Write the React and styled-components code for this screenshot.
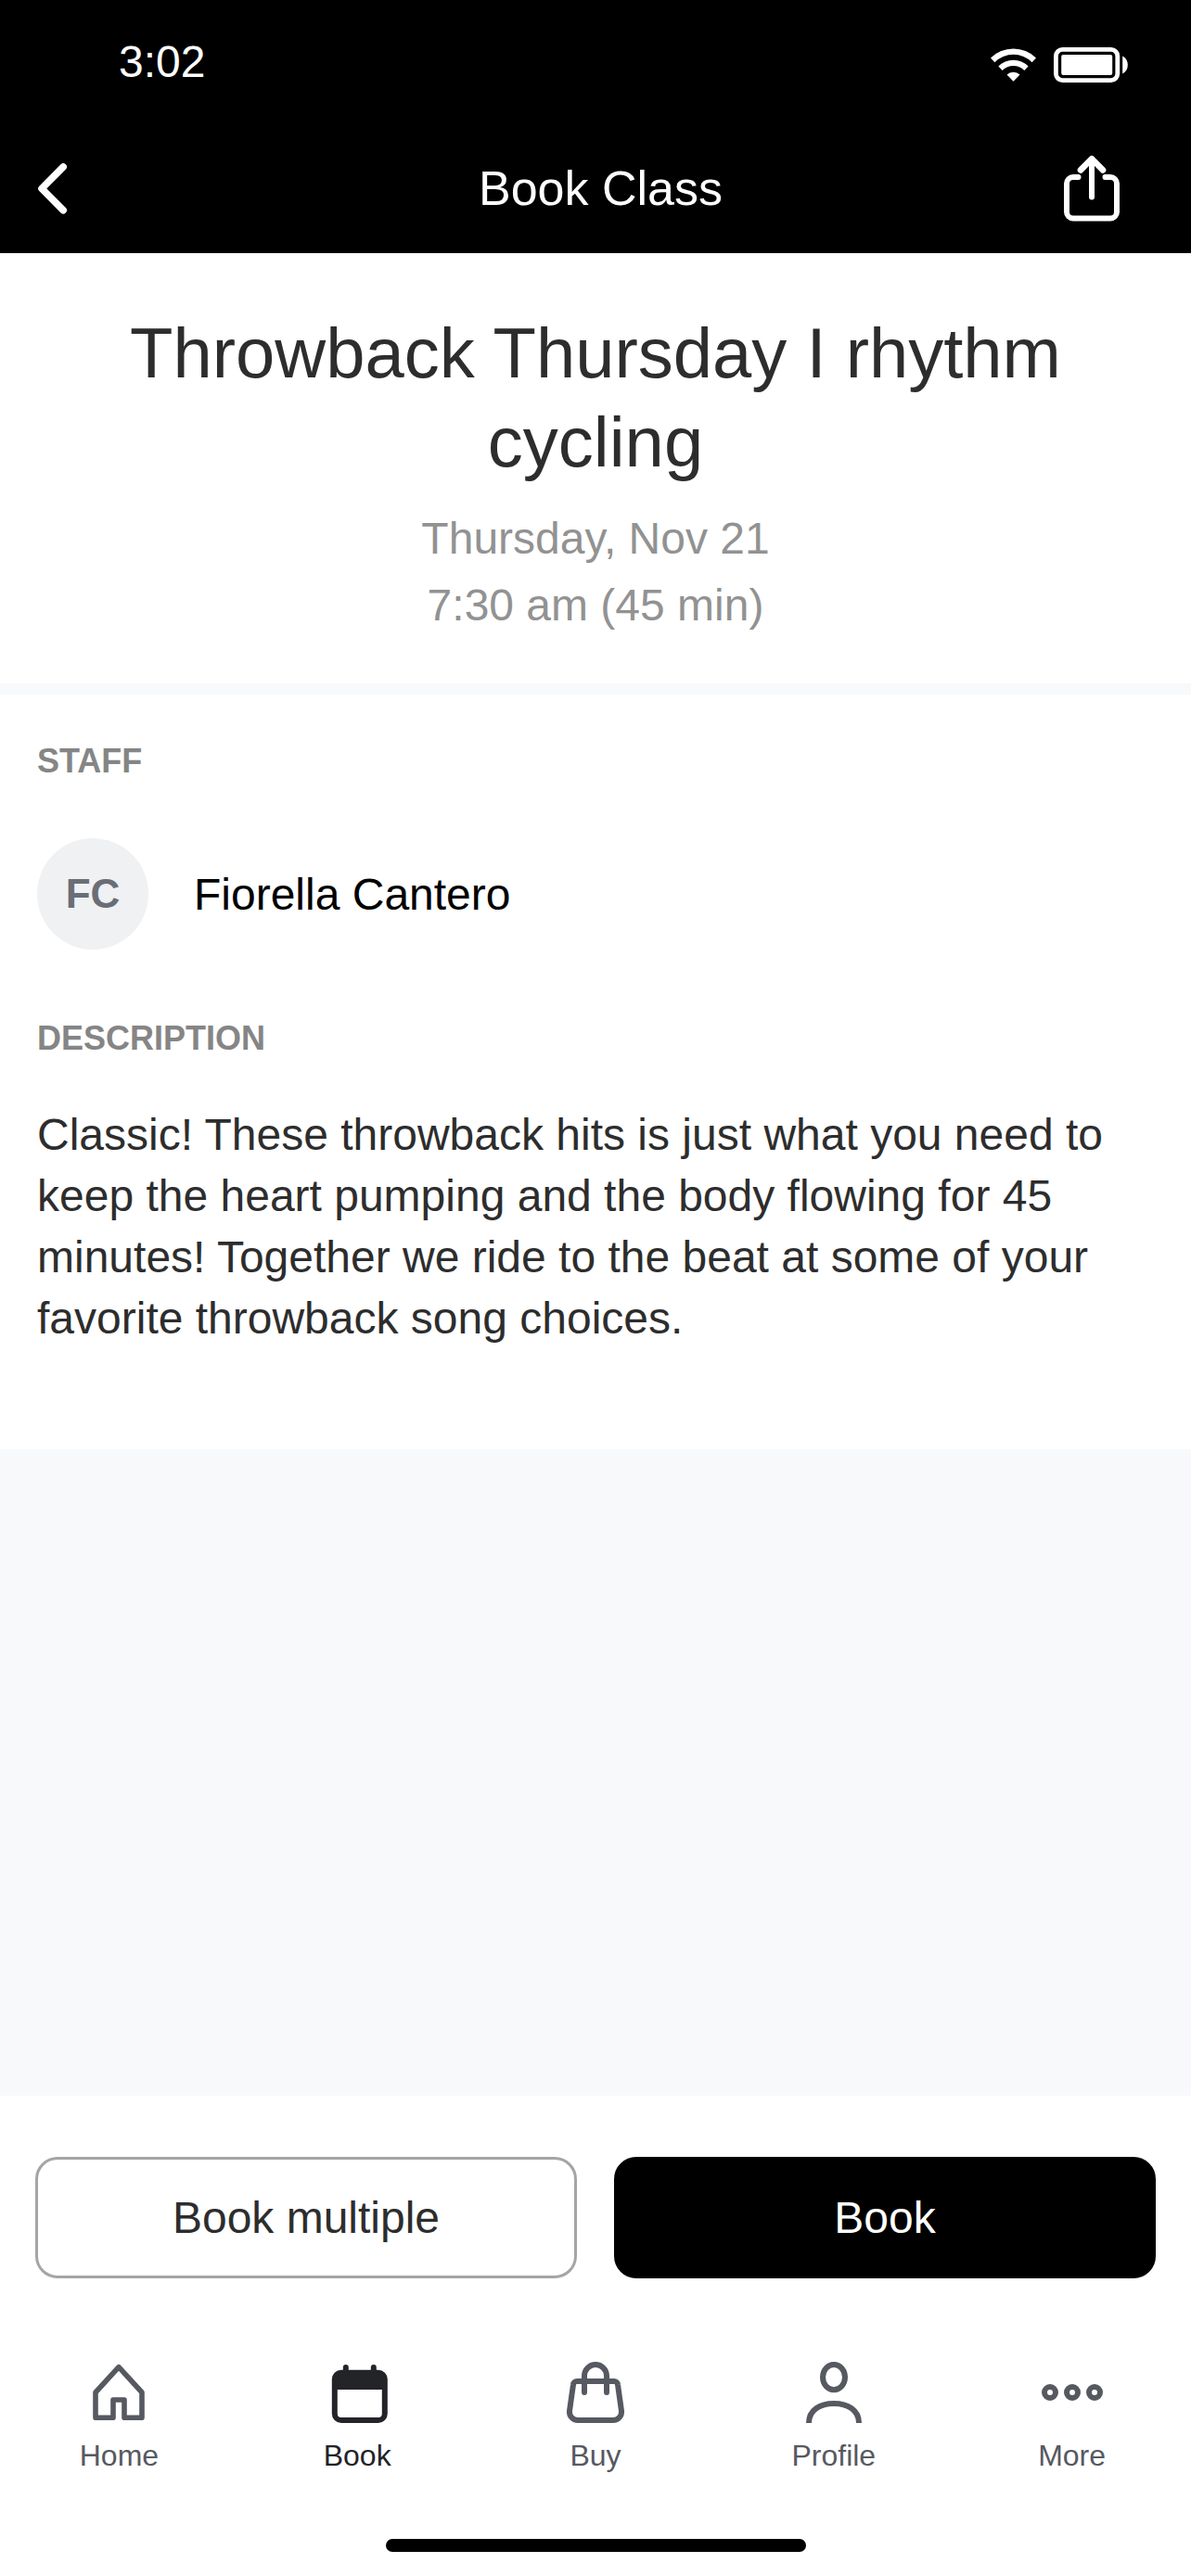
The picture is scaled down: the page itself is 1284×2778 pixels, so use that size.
import React from "react";
import styled, { createGlobalStyle } from "styled-components";

const GlobalStyle = createGlobalStyle`
  * { box-sizing: border-box; }
  body {
    margin: 0;
    background: #ffffff;
    font-family: "Liberation Sans", Arial, Helvetica, sans-serif;
    color: #2d2d2d;
  }
  h1, h2, p { margin: 0; font-weight: 400; }
  svg { display: block; flex: none; }
`;

const Screen = styled.div`
  min-height: 100vh;
  display: flex;
  flex-direction: column;
`;

const Header = styled.header`
  background: #000000;
  color: #ffffff;
`;

const StatusBar = styled.div`
  height: 132px;
  padding: 0 68px 0 128px;
  display: flex;
  align-items: center;
  justify-content: space-between;
`;

const Clock = styled.time`
  font-size: 48px;
`;

const StatusIcons = styled.div`
  display: flex;
  align-items: center;
  gap: 19px;
  padding-top: 8px;
`;

const NavBar = styled.div`
  height: 141px;
  padding: 0 77px 0 40px;
  display: flex;
  align-items: center;
  justify-content: space-between;
`;

const NavButton = styled.button`
  width: ${(p) => p.$width}px;
  height: 72px;
  padding: 0;
  border: 0;
  background: none;
  color: inherit;
  display: flex;
  align-items: center;
`;

const NavTitle = styled.p`
  font-size: 52px;
`;

const Intro = styled.section`
  padding: 60px 40px 48px;
  text-align: center;
  border-bottom: 12px solid #f8f9fb;
`;

const ClassName = styled.h1`
  font-size: 76px;
  line-height: 96px;
  margin-bottom: 20px;
`;

const When = styled.p`
  font-size: 48px;
  line-height: 72px;
  color: #929292;
`;

const Details = styled.section`
  padding: 50px 40px 108px;
`;

const Label = styled.h2`
  font-size: 36px;
  line-height: 44px;
  font-weight: 700;
  color: #858585;
`;

const StaffRow = styled.div`
  display: flex;
  align-items: center;
  gap: 49px;
  margin: 61px 0 74px;
`;

const Avatar = styled.span`
  width: 120px;
  height: 120px;
  border-radius: 50%;
  background: #eff1f3;
  color: #6b6d77;
  font-size: 44px;
  font-weight: 700;
  display: flex;
  align-items: center;
  justify-content: center;
`;

const StaffName = styled.span`
  font-size: 48px;
  color: #000000;
`;

const Description = styled.p`
  margin-top: 49px;
  font-size: 48px;
  line-height: 66px;
`;

const Spacer = styled.div`
  flex: 1;
  background: #f8f9fb;
`;

const Footer = styled.footer`
  display: flex;
  flex-direction: column;
  padding: 66px 0 26px;
`;

const Actions = styled.div`
  display: grid;
  grid-template-columns: 1fr 1fr;
  gap: 40px;
  padding: 0 38px;
`;

const ActionButton = styled.button`
  height: 131px;
  padding: 0;
  border: 3px solid ${(p) => (p.$primary ? "#000000" : "#a5a5a5")};
  border-radius: 24px;
  background: ${(p) => (p.$primary ? "#000000" : "#ffffff")};
  color: ${(p) => (p.$primary ? "#ffffff" : "#2d2d2d")};
  font-family: inherit;
  font-size: 48px;
`;

const TabBar = styled.nav`
  display: grid;
  grid-template-columns: repeat(5, 1fr);
  margin: 87px 0 72px;
`;

const Tab = styled.a`
  display: flex;
  flex-direction: column;
  align-items: center;
  gap: 14px;
  font-size: 32px;
  line-height: 36px;
  text-decoration: none;
  color: ${(p) => (p.$active ? "#232428" : "#575961")};
`;

const HomeIndicator = styled.div`
  align-self: center;
  width: 453px;
  height: 14px;
  border-radius: 7px;
  background: #000000;
`;

const WifiIcon = () => (
  <svg width="49" height="36" viewBox="0 0 49 36" fill="currentColor" aria-hidden="true">
    <path d="M0 10.4 A35 35 0 0 1 49 10.4 L44.6 15.2 A28.4 28.4 0 0 0 4.4 15.2 Z" />
    <path d="M8.4 19.6 A22.6 22.6 0 0 1 40.6 19.6 L36.3 24 A16.4 16.4 0 0 0 12.7 24 Z" />
    <path d="M17.5 28.6 A9.9 9.9 0 0 1 31.5 28.6 L24.5 35.8 Z" />
  </svg>
);

const BatteryIcon = () => (
  <svg width="80" height="38" viewBox="0 0 80 38" aria-hidden="true">
    <rect x="2.4" y="2.4" width="66.4" height="33.2" rx="7" fill="none" stroke="currentColor" strokeWidth="4.8" />
    <rect x="8.2" y="8" width="55" height="22" rx="2" fill="currentColor" />
    <path d="M74.2 9.6 C78 11.5 79.8 15 79.8 19 S78 26.5 74.2 28.4 Z" fill="currentColor" />
  </svg>
);

const BackIcon = () => (
  <svg width="36" height="56" viewBox="0 0 36 56" fill="none" stroke="currentColor" strokeWidth="7.6" strokeLinecap="round" strokeLinejoin="round" aria-hidden="true">
    <path d="M28.2 5 L5 28.4 L28.2 51.8" />
  </svg>
);

const ShareIcon = () => (
  <svg width="60" height="72" viewBox="0 0 60 72" fill="none" stroke="currentColor" strokeWidth="6" strokeLinecap="round" strokeLinejoin="round" aria-hidden="true">
    <path d="M15.5 24 H10 A7 7 0 0 0 3 31 V61.4 A7 7 0 0 0 10 68.4 H50 A7 7 0 0 0 57 61.4 V31 A7 7 0 0 0 50 24 H44.5" />
    <path d="M30 4.8 V45.4" />
    <path d="M18 16.4 L30 4.2 L42 16.4" strokeWidth="6.6" />
  </svg>
);

const TabIcon = ({ children }) => (
  <svg width="72" height="72" viewBox="0 0 72 72" fill="none" stroke="currentColor" strokeWidth="6" aria-hidden="true">
    {children}
  </svg>
);

const tabs = [
  {
    label: "Home",
    icon: (
      <path d="M36 8.6 L61 36 V63.2 H42 V44 H30 V63.2 H11 V36 Z" strokeWidth="5.6" strokeLinejoin="round" />
    ),
  },
  {
    label: "Book",
    active: true,
    icon: (
      <g fill="currentColor" stroke="none">
        <path
          fillRule="evenodd"
          d="M18.8 11.8 H58.8 A10 10 0 0 1 68.8 21.8 V59 A10 10 0 0 1 58.8 69 H18.8 A10 10 0 0 1 8.8 59 V21.8 A10 10 0 0 1 18.8 11.8 Z M14.8 33 V59 A4 4 0 0 0 18.8 63 H58.8 A4 4 0 0 0 62.8 59 V33 Z"
        />
        <rect x="20.8" y="6" width="6" height="12" rx="3" />
        <rect x="50.8" y="6" width="6" height="12" rx="3" />
      </g>
    ),
  },
  {
    label: "Buy",
    icon: (
      <g strokeLinecap="round">
        <path d="M16 24 H56 A4 4 0 0 1 60 27.6 L64 56 A9 9 0 0 1 55 66 H17 A9 9 0 0 1 8 56 L12 27.6 A4 4 0 0 1 16 24 Z" />
        <path d="M24 36 V18 A12 12 0 0 1 48 18 V36" />
      </g>
    ),
  },
  {
    label: "Profile",
    icon: (
      <>
        <ellipse cx="36" cy="19.6" rx="12" ry="13.6" />
        <path d="M9 69 C9 55 21 48 36 48 S63 55 63 69" />
      </>
    ),
  },
  {
    label: "More",
    icon: (
      <>
        <circle cx="12" cy="36" r="6" />
        <circle cx="36" cy="36" r="6" />
        <circle cx="60" cy="36" r="6" />
      </>
    ),
  },
];

export default function App() {
  return (
    <Screen>
      <GlobalStyle />
      <Header>
        <StatusBar>
          <Clock>3:02</Clock>
          <StatusIcons>
            <WifiIcon />
            <BatteryIcon />
          </StatusIcons>
        </StatusBar>
        <NavBar>
          <NavButton type="button" aria-label="Back" $width={108}>
            <BackIcon />
          </NavButton>
          <NavTitle>Book Class</NavTitle>
          <NavButton type="button" aria-label="Share" $width={60}>
            <ShareIcon />
          </NavButton>
        </NavBar>
      </Header>
      <Intro>
        <ClassName>Throwback Thursday I rhythm cycling</ClassName>
        <When>Thursday, Nov 21</When>
        <When>7:30 am (45 min)</When>
      </Intro>
      <Details>
        <Label>STAFF</Label>
        <StaffRow>
          <Avatar>FC</Avatar>
          <StaffName>Fiorella Cantero</StaffName>
        </StaffRow>
        <Label>DESCRIPTION</Label>
        <Description>
          Classic! These throwback hits is just what you need to keep the heart
          pumping and the body flowing for 45 minutes! Together we ride to the
          beat at some of your favorite throwback song choices.
        </Description>
      </Details>
      <Spacer />
      <Footer>
        <Actions>
          <ActionButton type="button">Book multiple</ActionButton>
          <ActionButton type="button" $primary>
            Book
          </ActionButton>
        </Actions>
        <TabBar>
          {tabs.map((tab) => (
            <Tab
              key={tab.label}
              href={`#${tab.label.toLowerCase()}`}
              $active={tab.active}
              aria-current={tab.active ? "page" : undefined}
            >
              <TabIcon>{tab.icon}</TabIcon>
              {tab.label}
            </Tab>
          ))}
        </TabBar>
        <HomeIndicator />
      </Footer>
    </Screen>
  );
}
